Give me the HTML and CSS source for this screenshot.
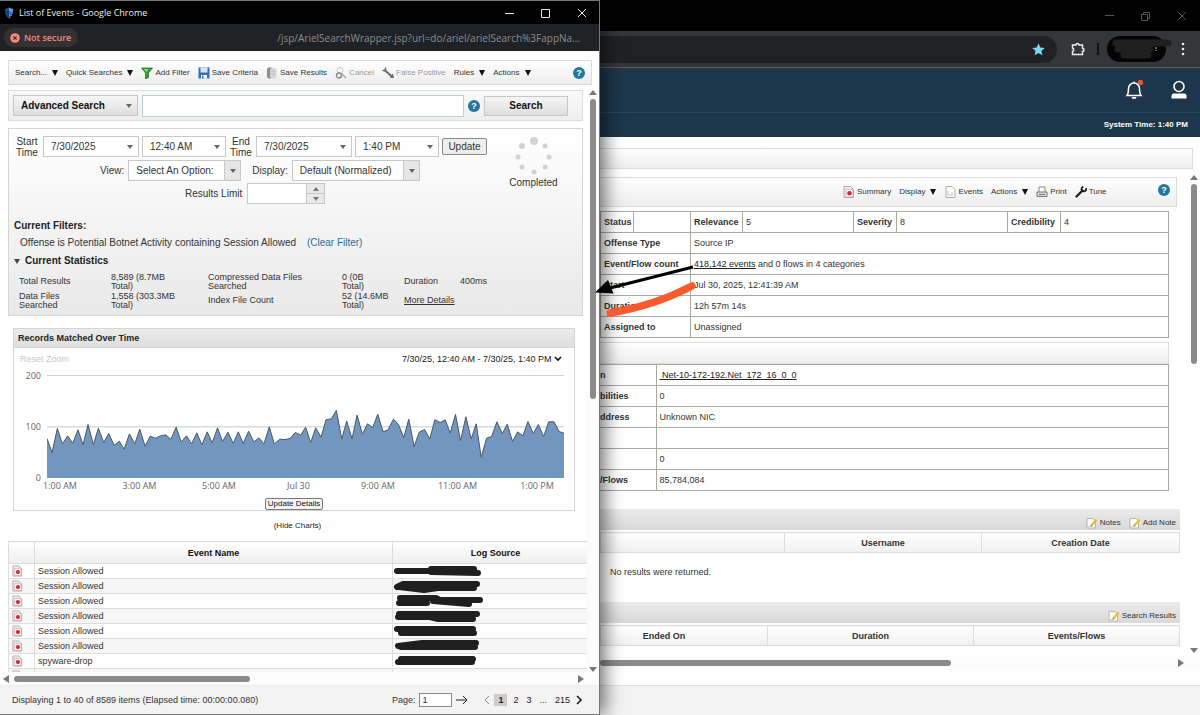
FILE: index.html
```html
<!DOCTYPE html>
<html lang="en">
  <head>
    <meta charset="UTF-8" />
    <meta name="viewport" content="width=device-width, initial-scale=1.0" />
    <title>List of Events</title>
    <link rel="stylesheet" href="styles.css">
  </head>
  <body>
    <!-- Shared icons -->
    <svg class="sprite" aria-hidden="true">
      <symbol id="i-event" viewBox="0 0 12 12">
        <path d="M1 .5h6.500l3 3v8H1z" fill="#f4f4f4" stroke="#a9a9a9" />
        <path d="M3 3h5l2 1.500v6.500H3z" fill="#fff" stroke="#d49a9a" stroke-width=".8" />
        <circle cx="6.500" cy="7.200" r="2.300" fill="#cf2b33" />
      </symbol>
      <symbol id="i-note" viewBox="0 0 12 12">
        <path d="M1 1.500h6l2.500 2.500v7H1z" fill="#fdfdf6" stroke="#b5b5a8" />
        <path d="M2 9.500h4" stroke="#d5d5cc" />
        <path d="M5.500 8.500l5-6" stroke="#e3bd35" stroke-width="2" />
        <path d="M5 9.300l.4-1.400" stroke="#776030" />
      </symbol>
      <symbol id="i-wrench" viewBox="0 0 12 12">
        <path d="M1.500 10.500L7.500 4.500" stroke="currentColor" stroke-width="2.400" stroke-linecap="round" />
        <path d="M11 2.200A2.300 2.300 0 1 1 8.300.8" stroke="currentColor" stroke-width="1.900" fill="none" />
      </symbol>
    </svg>

    <div class="desktop">
      <!-- Popup: list of events -->
      <section class="popup">
        <header class="titlebar">
          <svg class="app-icon" viewBox="0 0 12 14">
            <path d="M6 .5C4 1.500 2.500 2 1 2c0 5 1 9 5 11.500z" fill="#1f4f91" />
            <path d="M6 .5C8 1.500 9.500 2 11 2c0 5-1 9-5 11.500z" fill="#5b9be6" />
            <path d="M1 4.500l9 2M1.500 7l8.500 2M3 10l6 1.500" stroke="#0b1f3c" stroke-width=".8" />
          </svg>
          <span class="window-title">List of Events - Google Chrome</span>
          <svg class="window-controls" viewBox="0 0 82 12" fill="none" stroke="#e8e8e8">
            <path d="M0 6.500h9M36.500 2.500h8v8h-8zM73 2l8 8M81 2l-8 8" />
          </svg>
        </header>
        <div class="urlbar">
          <span class="not-secure">
            <svg viewBox="0 0 10 10"><circle cx="5" cy="5" r="4.800" fill="#f28b82" /><path d="M3.300 3.300l3.400 3.400M6.700 3.300L3.300 6.700" stroke="#5b2522" stroke-width="1.200" /></svg>
            Not secure
          </span>
          <span class="url">/jsp/ArielSearchWrapper.jsp?url=do/ariel/arielSearch%3FappNa...</span>
        </div>

        <nav class="toolbar">
          <button>Search... <i class="caret"></i></button>
          <button>Quick Searches <i class="caret"></i></button>
          <button>
            <svg viewBox="0 0 12 12"><path d="M.5 1h11L7.500 6v4.500L4.500 12V6z" fill="#2e9e35" stroke="#1b6b22" stroke-width=".7" /><path d="M2.500 2h5L5.500 5z" fill="#8fdc8a" /></svg>
            Add Filter
          </button>
          <button>
            <svg viewBox="0 0 12 12"><path d="M.5.5h11v11H.5z" fill="#2f6fc0" /><path d="M2.500.5h7v5h-7z" fill="#d9e8f8" /><path d="M3 8h6v3.500H3z" fill="#fff" /><path d="M4 8.500h1.500v3H4z" fill="#2f6fc0" /></svg>
            Save Criteria
          </button>
          <button>
            <svg viewBox="0 0 12 12"><rect x="1" y=".5" width="6" height="11" rx="2" fill="#8d8d8d" /><rect x="4" y="1" width="6.500" height="10.500" rx="2" fill="#d6d6d6" /><path d="M4 4h6M4 7h6" stroke="#bbb" stroke-width=".6" /></svg>
            Save Results
          </button>
          <button disabled>
            <svg viewBox="0 0 12 12" fill="none"><circle cx="5" cy="3.500" r="3" stroke="#c4c4c4" /><circle cx="4" cy="8.500" r="2.500" stroke="#8a8a8a" stroke-width="1.400" /><path d="M7 7l4 4" stroke="#aaa" stroke-width="1.600" /></svg>
            Cancel
          </button>
          <button disabled>
            <svg viewBox="0 0 12 12"><path d="M3 3.500l7 6" stroke="#6d6d6d" stroke-width="2.200" stroke-linecap="round" /><path d="M.5 3.500h3v-3M10.500 7v4M8 10h4" stroke="#6d6d6d" stroke-width="1.400" fill="none" /></svg>
            False Positive
          </button>
          <button>Rules <i class="caret"></i></button>
          <button>Actions <i class="caret"></i></button>
          <button class="help" aria-label="Help">?</button>
        </nav>

        <div class="scroll-area">
          <div class="popup-content">
            <form class="search-panel">
              <span class="select search-mode"><select aria-label="Search mode"><option>Advanced Search</option></select></span>
              <input class="query" type="text" aria-label="Query">
              <button type="button" class="help" aria-label="Help">?</button>
              <button type="button" class="search-btn">Search</button>
            </form>

            <section class="filters">
              <div class="filter-top">
                <form class="filter-form">
                  <div class="filter-row">
                    <label class="time-label" for="start-date">Start<br>Time</label>
                    <span class="select date"><select id="start-date"><option>7/30/2025</option></select></span>
                    <span class="select time"><select aria-label="Start hour"><option>12:40 AM</option></select></span>
                    <label class="time-label" for="end-date">End<br>Time</label>
                    <span class="select date"><select id="end-date"><option>7/30/2025</option></select></span>
                    <span class="select time"><select aria-label="End hour"><option>1:40 PM</option></select></span>
                    <button type="button" class="update-btn">Update</button>
                  </div>
                  <div class="filter-row view-row">
                    <label for="view">View:</label>
                    <span class="select boxed view"><select id="view"><option>Select An Option:</option></select></span>
                    <label class="display-label" for="display">Display:</label>
                    <span class="select boxed display"><select id="display"><option>Default (Normalized)</option></select></span>
                  </div>
                  <div class="filter-row limit-row">
                    <label for="limit">Results Limit</label>
                    <span class="spinner">
                      <input id="limit" type="text">
                      <span class="spinner-btns">
                        <button type="button" aria-label="Increase"><i class="tri up"></i></button>
                        <button type="button" aria-label="Decrease"><i class="tri"></i></button>
                      </span>
                    </span>
                  </div>
                </form>
                <div class="progress">
                  <svg viewBox="0 0 40 40" fill="#d2d2d2">
                    <circle cx="20" cy="5" r="4" /><circle cx="8" cy="10" r="3" /><circle cx="31" cy="10" r="2.500" />
                    <circle cx="4" cy="21" r="2.500" /><circle cx="35" cy="21" r="2.500" /><circle cx="8" cy="31" r="2.500" />
                    <circle cx="31" cy="31" r="2.500" /><circle cx="20" cy="36" r="2.500" />
                  </svg>
                  <span>Completed</span>
                </div>
              </div>

              <h3>Current Filters:</h3>
              <p class="filter-text">Offense is Potential Botnet Activity containing Session Allowed <a href="#">(Clear Filter)</a></p>
              <h3 class="stats-title"><i class="tri"></i>Current Statistics</h3>
              <table class="stats">
                <tr>
                  <td class="c1">Total Results</td><td class="c2">8,589 (8.7MB<br>Total)</td>
                  <td class="c3">Compressed Data Files<br>Searched</td><td class="c4">0 (0B<br>Total)</td>
                  <td class="c5">Duration</td><td>400ms</td>
                </tr>
                <tr>
                  <td>Data Files<br>Searched</td><td>1,558 (303.3MB<br>Total)</td>
                  <td>Index File Count</td><td>52 (14.6MB<br>Total)</td>
                  <td colspan="2"><a href="#">More Details</a></td>
                </tr>
              </table>
            </section>

            <section class="chart">
              <h2>Records Matched Over Time</h2>
              <div class="chart-bar">
                <span class="reset">Reset Zoom</span>
                <button class="range">7/30/25, 12:40 AM - 7/30/25, 1:40 PM
                  <svg viewBox="0 0 8 6"><path d="M1 1l3 3 3-3" fill="none" stroke="#111" stroke-width="1.600" /></svg>
                </button>
              </div>
              <div class="plot">
                <div class="y-axis"><span>200</span><span>100</span><span>0</span></div>
                <svg class="series" viewBox="142 152 1549 308" preserveAspectRatio="none">
                  <path d="M142 153H1691M142 307H1691" stroke="#c8c8c8" vector-effect="non-scaling-stroke" />
                  <path fill="#7296bd" d="M142 460V342L157 384 173 312 188 358 204 334 219 356 235 316 250 361 265 300 281 360 296 311 312 354 327 327 343 362 359 350 373 374 389 328 405 358 420 314 436 365 451 335 467 341 482 334 498 331 513 344 529 308 544 352 560 334 575 358 591 325 606 361 622 322 637 355 653 310 668 351 684 323 700 357 715 322 730 357 746 320 762 352 777 340 792 358 808 307 823 358 839 344 855 345 870 342 886 324 902 332 917 308 932 354 947 310 963 338 978 286 994 283 1009 258 1025 343 1040 290 1056 343 1071 272 1087 329 1102 298 1118 309 1133 269 1149 322 1164 316 1180 284 1195 300 1211 339 1226 284 1242 366 1257 323 1273 315 1289 343 1304 286 1320 294 1335 286 1350 326 1366 270 1381 348 1397 277 1413 343 1428 298 1443 398 1459 341 1474 336 1490 292 1506 327 1521 299 1537 351 1552 322 1568 334 1583 291 1599 327 1614 300 1630 336 1645 292 1661 292 1676 321 1691 326V460z" />
                  <path fill="none" stroke="#46586b" vector-effect="non-scaling-stroke" d="M142 342L157 384 173 312 188 358 204 334 219 356 235 316 250 361 265 300 281 360 296 311 312 354 327 327 343 362 359 350 373 374 389 328 405 358 420 314 436 365 451 335 467 341 482 334 498 331 513 344 529 308 544 352 560 334 575 358 591 325 606 361 622 322 637 355 653 310 668 351 684 323 700 357 715 322 730 357 746 320 762 352 777 340 792 358 808 307 823 358 839 344 855 345 870 342 886 324 902 332 917 308 932 354 947 310 963 338 978 286 994 283 1009 258 1025 343 1040 290 1056 343 1071 272 1087 329 1102 298 1118 309 1133 269 1149 322 1164 316 1180 284 1195 300 1211 339 1226 284 1242 366 1257 323 1273 315 1289 343 1304 286 1320 294 1335 286 1350 326 1366 270 1381 348 1397 277 1413 343 1428 298 1443 398 1459 341 1474 336 1490 292 1506 327 1521 299 1537 351 1552 322 1568 334 1583 291 1599 327 1614 300 1630 336 1645 292 1661 292 1676 321 1691 326" />
                </svg>
              </div>
              <div class="x-axis"><span>1:00 AM</span><span>3:00 AM</span><span>5:00 AM</span><span>Jul 30</span><span>9:00 AM</span><span>11:00 AM</span><span>1:00 PM</span></div>
              <button class="update-details">Update Details</button>
            </section>
            <button class="hide-charts">(Hide Charts)</button>

            <div class="events-wrap">
              <table class="events">
                <thead>
                  <tr><th class="icon-col"></th><th class="name-col">Event Name</th><th>Log Source</th></tr>
                </thead>
                <tbody>
                  <tr><td><svg><use href="#i-event" /></svg></td><td>Session Allowed</td><td><svg class="scrub" viewBox="0 0 90 14"><path d="M4 7h32M38 5h43M38 8l47 1" /></svg></td></tr>
                  <tr><td><svg><use href="#i-event" /></svg></td><td>Session Allowed</td><td><svg class="scrub" viewBox="0 0 90 14"><path d="M4 8l6-3h74M6 8l25 3 14-2h36" /></svg></td></tr>
                  <tr><td><svg><use href="#i-event" /></svg></td><td>Session Allowed</td><td><svg class="scrub" viewBox="0 0 90 14"><path d="M7 4h36l4 2h40M6 9h28M40 7l36 3" /></svg></td></tr>
                  <tr><td><svg><use href="#i-event" /></svg></td><td>Session Allowed</td><td><svg class="scrub" viewBox="0 0 90 14"><path d="M6 5h78M5 8h32l8 2h35" /></svg></td></tr>
                  <tr><td><svg><use href="#i-event" /></svg></td><td>Session Allowed</td><td><svg class="scrub" viewBox="0 0 90 14"><path d="M4 5h76M8 9h73" /></svg></td></tr>
                  <tr><td><svg><use href="#i-event" /></svg></td><td>Session Allowed</td><td><svg class="scrub" viewBox="0 0 90 14"><path d="M5 7l24-3h54M8 8h74" /></svg></td></tr>
                  <tr><td><svg><use href="#i-event" /></svg></td><td>spyware-drop</td><td><svg class="scrub" viewBox="0 0 90 14"><path d="M8 5h72M5 8h74" /></svg></td></tr>
                  <tr><td><svg><use href="#i-event" /></svg></td><td></td><td></td></tr>
                </tbody>
              </table>
            </div>
          </div>
          <div class="vscroll"><i class="tri up"></i><span class="thumb"></span><i class="tri"></i></div>
        </div>
        <div class="hscroll"><i class="tri left"></i><span class="thumb"></span><i class="tri right"></i></div>

        <footer class="pager">
          <span>Displaying 1 to 40 of 8589 items (Elapsed time: 00:00:00.080)</span>
          <div class="pages">
            <label for="page">Page:</label>
            <input id="page" type="text" value="1">
            <button aria-label="Go"><svg class="go" viewBox="0 0 12 10"><path d="M0 5h11M7 1l4 4-4 4" /></svg></button>
            <button class="prev" aria-label="Previous"><svg viewBox="0 0 6 10"><path d="M5 1L1 5l4 4" /></svg></button>
            <a class="current" href="#">1</a>
            <a href="#">2</a>
            <a href="#">3</a>
            <span class="dots">...</span>
            <a href="#">215</a>
            <button aria-label="Next"><svg viewBox="0 0 6 10"><path d="M1 1l4 4-4 4" stroke-width="1.600" /></svg></button>
          </div>
        </footer>
      </section>

      <!-- Main window: offense summary -->
      <section class="main">
        <header class="main-titlebar">
          <svg viewBox="0 0 82 12" fill="none" stroke="#555">
            <path d="M0 5.500h9M36.500 4.500h6v6h-6zM38.500 4v-1.500h6v6H43M73 2l8 8M81 2l-8 8" />
          </svg>
        </header>
        <div class="main-urlbar">
          <div class="omnibox"><svg viewBox="0 0 12 12"><path fill="#7cd5ee" d="M6 .3l1.700 3.800 4.100.4-3.100 2.800.9 4.100L6 9.300l-3.600 2.100.9-4.100L.2 4.500l4.100-.4z" /></svg></div>
          <svg class="ext" viewBox="0 0 14 14"><path d="M1.500 3h3.500a1.500 1.500 0 0 1 3 0h3.500v3.500a1.500 1.500 0 0 1 0 3v3h-10V9.500a1.700 1.700 0 0 0 0-3.300z" fill="none" stroke="#e8eaed" stroke-width="1.500" /></svg>
          <span class="divider"></span>
          <svg class="profile" viewBox="0 0 68 28"><rect x="1" y="1" width="59" height="26" rx="13" fill="#040404" /><path d="M10 8h52M12 14h32M18 20h24" stroke="#202020" stroke-width="7" stroke-linecap="round" /><path d="M50 12v2M50 15v1" stroke="#bbb" /></svg>
          <svg class="menu" viewBox="0 0 4 14" fill="#e8eaed"><circle cx="2" cy="2" r="1.300" /><circle cx="2" cy="7" r="1.300" /><circle cx="2" cy="12" r="1.300" /></svg>
        </div>
        <div class="app-header">
          <svg viewBox="0 0 20 22"><path d="M2 16.500h14c-1.500-2-1.500-4-1.500-7a5.500 5.500 0 0 0-11 0c0 3 0 5-1.500 7zM9 4V2.500" fill="none" stroke="#fff" stroke-width="1.500" /><path d="M6.500 18h5a2.500 2 0 0 1-5 0z" fill="#fff" /><circle cx="15.500" cy="3.500" r="2.700" fill="#e8572b" /></svg>
          <svg viewBox="0 0 20 22"><circle cx="10" cy="7.500" r="5" fill="none" stroke="#fff" stroke-width="1.600" /><path d="M2.500 19.500v-2.500q0-2.500 2.500-2.500h10q2.500 0 2.500 2.500v2.500z" fill="#fff" /></svg>
        </div>
        <div class="system-time">System Time: 1:40 PM</div>

        <div class="crumbs"></div>

        <div class="scroll-area main-scroll">
          <div class="main-content">
            <nav class="toolbar main-toolbar">
              <button><svg><use href="#i-event" /></svg> Summary</button>
              <button>Display <i class="caret"></i></button>
              <button><svg viewBox="0 0 12 12"><path d="M2 .5h6l3 3v8H2z" fill="#fff" stroke="#aaa" /><path d="M4 5v5M6 8v2M8 6v4" stroke="#bbb" /></svg> Events</button>
              <button>Actions <i class="caret"></i></button>
              <button><svg viewBox="0 0 12 12"><path d="M3 6V1h6v5" fill="#fff" stroke="#888" /><path d="M1 6h10v4.500H1z" fill="#ddd" stroke="#777" /><path d="M3 8.500h6" stroke="#777" /></svg> Print</button>
              <button><svg class="tune"><use href="#i-wrench" /></svg> Tune</button>
              <button class="help" aria-label="Help">?</button>
            </nav>

            <table class="offense">
              <tr>
                <th class="o1">Status</th><td class="o2"></td>
                <th class="o3">Relevance</th><td class="o4">5</td>
                <th class="o5">Severity</th><td class="o6">8</td>
                <th class="o7">Credibility</th><td>4</td>
              </tr>
              <tr><th colspan="2">Offense Type</th><td colspan="6">Source IP</td></tr>
              <tr><th colspan="2">Event/Flow count</th><td colspan="6"><a href="#">418,142 events</a> and 0 flows in 4 categories</td></tr>
              <tr><th colspan="2">Start</th><td colspan="6">Jul 30, 2025, 12:41:39 AM</td></tr>
              <tr><th colspan="2">Duration</th><td colspan="6">12h 57m 14s</td></tr>
              <tr><th colspan="2">Assigned to</th><td colspan="6">Unassigned</td></tr>
            </table>

            <div class="section-bar"></div>
            <table class="offense source">
              <tr><th>n</th><td><a href="#">&nbsp;Net-10-172-192.Net_172_16_0_0</a></td></tr>
              <tr><th>bilities</th><td>0</td></tr>
              <tr><th>ddress</th><td>Unknown NIC</td></tr>
              <tr><th></th><td></td></tr>
              <tr><th></th><td>0</td></tr>
              <tr><th>/Flows</th><td>85,784,084</td></tr>
            </table>

            <div class="grid-bar">
              <button><svg><use href="#i-note" /></svg> Notes</button>
              <button><svg><use href="#i-note" /></svg> Add Note</button>
            </div>
            <table class="grid notes">
              <tr><th class="n1"></th><th class="n2">Username</th><th>Creation Date</th></tr>
            </table>
            <p class="empty">No results were returned.</p>

            <div class="grid-bar">
              <button><svg><use href="#i-note" /></svg> Search Results</button>
            </div>
            <table class="grid results">
              <tr><th class="r1">Ended On</th><th class="r2">Duration</th><th>Events/Flows</th></tr>
            </table>
          </div>
          <div class="vscroll main-vscroll"><i class="tri up"></i><span class="thumb"></span><i class="tri"></i></div>
        </div>
        <div class="hscroll main-hscroll"><span class="thumb"></span><i class="tri right"></i></div>
        <footer class="main-footer"></footer>

        <!-- Hand drawn marks over both windows -->
        <svg class="marks" viewBox="0 0 110 60">
          <path d="M100 6L15 27.500" stroke="#000" stroke-width="3.200" />
          <path d="M2 31.500L15 19l5.500 13.500z" fill="#000" />
          <path d="M17 52C48 47 78 36 99 25" fill="none" stroke="#fa5a2d" stroke-width="7.500" stroke-linecap="round" />
        </svg>
      </section>
    </div>
  </body>
</html>
```
FILE: styles.css
```css
* {
  box-sizing: border-box;
}

body {
  margin: 0;
  font-family: "Liberation Sans", Arial, sans-serif;
  font-size: 9px;
  line-height: 12px;
  color: #333;
  background: #fff;
}

button,
input,
select {
  font: inherit;
  color: inherit;
  margin: 0;
}

button {
  padding: 0;
  border: 0;
  background: none;
  cursor: pointer;
}

h2,
h3,
p {
  margin: 0;
}

a {
  color: inherit;
}

table {
  border-collapse: collapse;
  table-layout: fixed;
}

.sprite {
  display: none;
}

.desktop {
  display: grid;
  grid-template-columns: minmax(0, 1fr) minmax(0, 1fr);
  height: 100vh;
  overflow: hidden;
}

/* Small shapes */
.caret,
.tri {
  display: inline-block;
  width: 0;
  height: 0;
  border: 3px solid transparent;
  border-top: 6px solid #111;
  border-bottom: 0;
}

.caret {
  margin-left: 3px;
}

.tri {
  border-width: 4px;
  border-top: 5px solid #777;
  border-bottom: 0;
}

.tri.up {
  border-top: 0;
  border-bottom: 5px solid #777;
}

.tri.left {
  border: 4px solid transparent;
  border-right: 6px solid #777;
  border-left: 0;
}

.tri.right {
  border: 4px solid transparent;
  border-left: 6px solid #777;
  border-right: 0;
}

.help {
  width: 12px;
  height: 12px;
  flex: none;
  border-radius: 50%;
  background: #22789f;
  color: #fff;
  font-weight: 700;
  font-size: 9px;
  line-height: 12px;
  text-align: center;
}

/* Popup window */
.popup {
  position: relative;
  z-index: 1;
  display: flex;
  flex-direction: column;
  min-height: 0;
  background: #fff;
  border: 1px solid #777;
  border-left: 0;
  box-shadow: 4px 0 18px rgba(0, 0, 0, 0.6);
}

.titlebar {
  display: flex;
  align-items: center;
  height: 23px;
  padding: 0 12px 0 4px;
  background: #000;
  color: #eee;
  font-family: "Open Sans", "Noto Sans", sans-serif;
}

.app-icon {
  width: 10px;
  height: 14px;
  margin-right: 5px;
}

.window-title {
  flex: 1;
}

.window-controls {
  width: 82px;
  height: 12px;
}

.urlbar {
  display: flex;
  align-items: center;
  justify-content: space-between;
  height: 27px;
  padding: 0 19px 0 4px;
  background: #202124;
  font-family: "Open Sans", "Noto Sans", sans-serif;
}

.not-secure {
  display: flex;
  align-items: center;
  gap: 4px;
  height: 19px;
  padding: 0 7px 0 6px;
  border-radius: 10px;
  background: #353132;
  color: #ee8a82;
  font-weight: 600;
}

.not-secure svg {
  width: 10px;
  height: 10px;
}

.url {
  font-size: 10px;
  color: #8c8e91;
}

.toolbar {
  display: flex;
  align-items: center;
  gap: 8px;
  height: 25px;
  margin: 9px 7px 5px 8px;
  padding: 0 6px;
  border: 1px solid #dcdcdc;
  background: linear-gradient(#fff, #ededed);
  font-size: 8px;
}

.toolbar button {
  display: flex;
  align-items: center;
  gap: 2px;
  white-space: nowrap;
}

.toolbar button:disabled {
  color: #999;
}

.toolbar svg {
  width: 12px;
  height: 12px;
}

.toolbar .help {
  justify-content: center;
  margin-left: auto;
}

.scroll-area {
  display: flex;
  flex: 1;
  min-height: 0;
}

.popup-content {
  flex: 1;
  min-width: 0;
  padding-left: 8px;
  overflow: hidden;
}

.vscroll {
  display: flex;
  flex-direction: column;
  align-items: center;
  width: 12px;
  background: #fcfcfc;
}

.vscroll .thumb {
  width: 6px;
  height: 300px;
  margin: 4px 0 auto;
  border-radius: 3px;
  background: #8b8b8b;
}

.hscroll {
  display: flex;
  align-items: center;
  height: 13px;
  padding: 0 15px 0 3px;
  background: #fcfcfc;
}

.hscroll .thumb {
  width: 236px;
  height: 6px;
  margin: 0 auto 0 5px;
  border-radius: 3px;
  background: #8b8b8b;
}

.search-panel {
  display: flex;
  align-items: center;
  height: 31px;
  margin-right: 4px;
  padding: 0 14px 0 4px;
  border: 1px solid #ddd;
  background: linear-gradient(#fafafa, #eee);
}

.select {
  position: relative;
  display: block;
  height: 21px;
  border: 1px solid #c8c8c8;
  background: #fff;
  font-size: 10px;
}

.select select {
  width: 100%;
  height: 100%;
  padding: 0 0 0 7px;
  border: 0;
  background: none;
  appearance: none;
}

.select::after {
  content: "";
  position: absolute;
  right: 5px;
  top: 8px;
  border: 3px solid transparent;
  border-top: 4px solid #666;
  border-bottom: 0;
  pointer-events: none;
}

.search-mode {
  width: 125px;
  background: linear-gradient(#f6f6f6, #dedede);
  font-weight: 700;
}

.query {
  flex: 1;
  min-width: 0;
  height: 22px;
  margin: 0 4px;
  border: 1px solid #b9d0d3;
  background: #fff;
}

.search-btn {
  width: 84px;
  height: 20px;
  margin-left: 4px;
  border: 1px solid #c8c8c8;
  background: linear-gradient(#f6f6f6, #dedede);
  font-size: 10px;
  font-weight: 700;
}

.search-mode,
.search-btn {
  color: #111;
}

.filters {
  height: 188px;
  margin: 7px 4px 0 0;
  padding: 7px 0 0 5px;
  border: 1px solid #d5d5d5;
  background: linear-gradient(#fff, #e9e9e9);
}

.filter-top {
  display: flex;
  justify-content: space-between;
}

.filter-form {
  font-size: 10px;
}

.filter-row {
  display: flex;
  align-items: center;
  gap: 3px;
  height: 21px;
}

.time-label {
  width: 26px;
  text-align: center;
  line-height: 11px;
}

.date {
  width: 96px;
}

.time {
  width: 84px;
}

.time + .time-label {
  margin: 0 -1px;
}

.update-btn {
  width: 45px;
  height: 17px;
  border: 1px solid #888;
  border-radius: 2px;
  background: #eee;
}

.view-row {
  gap: 4px;
  margin: 3px 0 2px;
  padding-left: 86px;
}

.boxed::after {
  right: 4px;
}

.boxed select {
  background: linear-gradient(90deg, transparent calc(100% - 16px), #c8c8c8 calc(100% - 16px), #c8c8c8 calc(100% - 15px), #e6e6e6 calc(100% - 15px));
}

.view {
  width: 113px;
}

.display-label {
  margin-left: 7px;
}

.display {
  width: 128px;
}

.limit-row {
  gap: 5px;
  padding-left: 171px;
}

.spinner {
  display: flex;
  width: 78px;
  height: 21px;
  border: 1px solid #c8c8c8;
}

.spinner input {
  flex: 1;
  min-width: 0;
  border: 0;
  background: #fff;
}

.spinner-btns {
  display: flex;
  flex-direction: column;
  width: 18px;
  border-left: 1px solid #c8c8c8;
}

.spinner-btns button {
  display: flex;
  flex: 1;
  align-items: center;
  justify-content: center;
  background: #e9e9e9;
}

.spinner-btns button + button {
  border-top: 1px solid #c8c8c8;
}

.spinner-btns .tri {
  border-left-width: 3px;
  border-right-width: 3px;
  border-top-width: 4px;
}

.spinner-btns .tri.up {
  border-top-width: 0;
  border-bottom-width: 4px;
}

.progress {
  display: flex;
  flex-direction: column;
  align-items: center;
  width: 98px;
  margin-right: 2px;
  font-size: 10px;
}

.progress svg {
  width: 40px;
  height: 40px;
  margin-bottom: 1px;
}

.filters h3 {
  margin-top: 15px;
  font-size: 10px;
  line-height: 14px;
  color: #222;
}

.filter-text {
  padding: 4px 0 0 6px;
  font-size: 10px;
}

.filter-text a {
  margin-left: 8px;
  color: #2a6f95;
  text-decoration: none;
}

.filters .stats-title {
  display: flex;
  align-items: center;
  gap: 5px;
  margin-top: 5px;
}

.stats-title .tri {
  border-left-width: 3px;
  border-right-width: 3px;
  border-top-color: #444;
}

.stats {
  width: 100%;
  margin: 4px 0 0 5px;
  line-height: 9px;
}

.stats td {
  height: 19px;
  padding: 0;
}

.c1 {
  width: 92px;
}

.c2 {
  width: 97px;
}

.c3 {
  width: 134px;
}

.c4 {
  width: 62px;
}

.c5 {
  width: 56px;
}

/* Chart */
.chart {
  height: 183px;
  margin: 12px 12px 0 5px;
  border: 1px solid #d5d5d5;
}

.chart h2 {
  height: 19px;
  padding-left: 4px;
  border-bottom: 1px solid #d5d5d5;
  background: linear-gradient(#ececec, #dedede);
  font-size: 9px;
  line-height: 19px;
  color: #222;
}

.chart-bar {
  display: flex;
  justify-content: space-between;
  padding: 5px 12px 0 6px;
}

.reset {
  color: #c9c9c9;
}

.range {
  color: #222;
}

.range svg {
  width: 8px;
  height: 6px;
}

.plot {
  display: flex;
  height: 103px;
  margin: 10px 10px 0 0;
}

.y-axis {
  display: flex;
  flex-direction: column;
  justify-content: space-between;
  width: 27px;
  margin: -5px 6px -6px 0;
  text-align: right;
}

.y-axis,
.x-axis {
  font-family: "Open Sans", "Noto Sans", sans-serif;
  color: #666;
}

.series {
  flex: 1;
  min-width: 0;
  height: 103px;
}

.x-axis {
  display: flex;
  justify-content: space-between;
  margin: 2px 15px 0 24px;
}

.x-axis span {
  width: 44px;
  text-align: center;
  white-space: nowrap;
}

.update-details {
  display: block;
  width: 58px;
  height: 12px;
  margin: 6px auto 0;
  border: 1px solid #777;
  border-radius: 2px;
  background: #f4f4f4;
  font-size: 8px;
  line-height: 10px;
  color: #111;
}

.hide-charts {
  display: block;
  margin: 9px auto;
  font-size: 8px;
  line-height: 12px;
  color: #222;
}

/* Event list */
.events-wrap {
  overflow: hidden;
}

.events {
  width: calc(100% + 12px);
}

.events th {
  height: 22px;
  padding: 0;
  border: 1px solid #ddd;
  background: linear-gradient(#fff, #eee);
  color: #111;
}

.events td {
  height: 15px;
  padding: 0 0 0 3px;
  border: 1px solid #ddd;
  line-height: 12px;
}

.events tr:nth-child(even) td {
  background: #f6f6f6;
}

.events td svg {
  display: block;
  width: 11px;
  height: 12px;
}

.events td:last-child {
  padding-left: 0;
}

.events .scrub {
  width: 90px;
  height: 14px;
  fill: none;
  stroke: #1f1f1f;
  stroke-width: 6;
  stroke-linecap: round;
  stroke-linejoin: round;
}

.icon-col {
  width: 26px;
}

.name-col {
  width: 358px;
}

.pager {
  display: flex;
  align-items: center;
  justify-content: space-between;
  height: 29px;
  padding: 0 17px 0 12px;
  border-top: 1px solid #ececec;
  background: #f3f3f3;
}

.pages {
  display: flex;
  align-items: center;
  gap: 4px;
}

.pages input {
  width: 33px;
  height: 14px;
  padding: 0 2px;
  border: 1px solid #888;
  background: #fff;
}

.pages a {
  padding: 0 2px;
  color: #222;
  text-decoration: none;
}

.pages .current {
  padding: 0 4px;
  background: #ccc;
  font-weight: 700;
}

.pages .dots {
  margin: 0 2px;
}

.pages svg {
  display: block;
  width: 6px;
  height: 10px;
  fill: none;
  stroke: #222;
}

.pages .go {
  width: 12px;
}

.pages .prev {
  margin-left: 12px;
  opacity: 0.5;
}

/* Main window */
.main {
  position: relative;
  display: flex;
  flex-direction: column;
  min-height: 0;
  background: #fff;
}

.main-titlebar {
  display: flex;
  align-items: center;
  justify-content: flex-end;
  height: 31px;
  padding-right: 13px;
  background: #000;
}

.main-titlebar svg {
  width: 82px;
  height: 12px;
}

.main-urlbar {
  display: flex;
  align-items: center;
  height: 37px;
  padding-right: 15px;
  border-bottom: 1px solid #5a5c5f;
  background: #35363a;
}

.omnibox {
  display: flex;
  align-items: center;
  justify-content: flex-end;
  flex: 1;
  height: 27px;
  padding-right: 12px;
  border-radius: 0 14px 14px 0;
  background: #202124;
}

.omnibox svg {
  width: 13px;
  height: 13px;
}

.ext {
  width: 14px;
  height: 14px;
  margin-left: 14px;
}

.divider {
  width: 2px;
  height: 12px;
  margin: 0 7px 0 12px;
  background: #111;
}

.profile {
  width: 68px;
  height: 28px;
}

.menu {
  width: 4px;
  height: 14px;
  margin-left: 7px;
}

.app-header {
  display: flex;
  align-items: center;
  justify-content: flex-end;
  gap: 24px;
  height: 45px;
  padding-right: 11px;
  border-bottom: 1px solid #2b475e;
  background: #1d364b;
}

.app-header svg {
  width: 20px;
  height: 22px;
}

.system-time {
  height: 24px;
  padding-right: 12px;
  background: #1d364b;
  color: #fff;
  font-size: 8px;
  font-weight: 700;
  line-height: 24px;
  text-align: right;
}

.crumbs {
  height: 21px;
  margin: 11px 7px 4px 0;
  border: 1px solid #ddd;
  border-left: 0;
  background: linear-gradient(#fff, #eee);
}

.main-content {
  flex: 1;
  min-width: 0;
  overflow: hidden;
}

.main-toolbar {
  height: 30px;
  margin: 4px 10px 4px 0;
  padding: 0 6px 0 243px;
  border-left: 0;
}

.main-toolbar .help {
  margin-bottom: 4px;
}

.tune {
  color: #222;
}

.offense {
  width: calc(100% - 18px);
}

.offense th,
.offense td {
  height: 21px;
  padding: 0 3px;
  border: 1px solid #a9a99e;
  text-align: left;
}

.offense th {
  white-space: nowrap;
}

.offense td a {
  color: #222;
}

.o1 {
  width: 33px;
}

.o2 {
  width: 57px;
}

.o3 {
  width: 52px;
}

.o4 {
  width: 111px;
}

.o5 {
  width: 43px;
}

.o6 {
  width: 111px;
}

.o7 {
  width: 53px;
}

.section-bar {
  height: 22px;
  margin: 4px 18px 0 0;
  border: 1px solid #ddd;
  border-left: 0;
  background: linear-gradient(#fff, #eee);
}

.source th {
  width: 56px;
  padding-left: 0;
  border-left: 0;
}

.grid-bar {
  display: flex;
  align-items: flex-end;
  justify-content: flex-end;
  gap: 8px;
  height: 21px;
  margin: 18px 7px 2px 0;
  padding: 0 4px 1px 0;
  background: linear-gradient(#ebebeb, #d9d9d9);
  font-size: 8px;
}

.grid-bar button {
  display: flex;
  align-items: center;
  gap: 2px;
}

.grid-bar svg {
  width: 12px;
  height: 12px;
}

.grid {
  width: calc(100% - 7px);
}

.grid th {
  height: 20px;
  padding: 0;
  border: 1px solid #ddd;
  background: linear-gradient(#fff, #f0f0f0);
}

.n1 {
  width: 184px;
}

.n2 {
  width: 197px;
}

.r1 {
  width: 167px;
}

.r2 {
  width: 206px;
}

.results .r1 {
  padding-right: 40px;
}

.empty {
  padding: 13px 0 0 10px;
  height: 31px;
}

.main-vscroll {
  width: 13px;
  background: #fff;
  padding: 2px 0 3px;
}

.main-vscroll .thumb {
  height: 180px;
}

.main-hscroll {
  height: 13px;
  padding: 0 16px 0 0;
}

.main-hscroll .thumb {
  width: 351px;
  margin-left: 0;
}

.main-footer {
  height: 30px;
  margin-top: 16px;
  border-top: 1px solid #e2e2e2;
  background: #f3f3f3;
}

.marks {
  position: absolute;
  left: -7px;
  top: 261px;
  z-index: 2;
  width: 110px;
  height: 60px;
  pointer-events: none;
}
```
